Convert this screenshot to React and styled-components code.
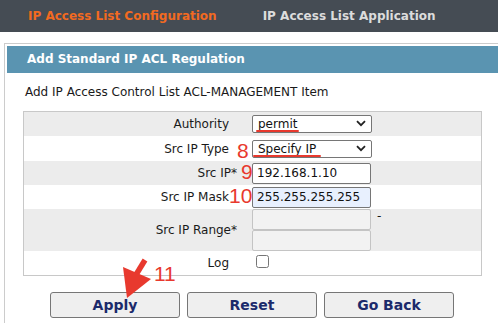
import React from 'react';
import styled, { createGlobalStyle } from 'styled-components';

const GlobalStyle = createGlobalStyle`
  body {
    margin: 0;
    font-family: 'DejaVu Sans', Verdana, sans-serif;
    font-size: 12px;
    color: #1a1a1a;
    background: #ffffff;
    overflow: hidden;
  }
`;

// components
const TopBar = styled.div`
  height: 32px;
  background-color: #454c54;
  display: flex;
  align-items: center;
  gap: 46px;
  padding-left: 28px;
`;

const Tab = styled.div`
  font-weight: bold;
  font-size: 12px;
  color: ${props => (props.$active ? '#f26a21' : '#dcdcdc')};
`;

const Panel = styled.div`
  box-sizing: border-box;
  margin: 11px 0 0 4px;
  border: 1px solid #cccccc;
  border-right: none;
  border-bottom: none;
  padding: 2px 0 0 2px;
  min-height: 280px;
`;

const PanelHeader = styled.div`
  height: 27px;
  line-height: 27px;
  background-color: #5a94b1;
  color: #ffffff;
  font-weight: bold;
  font-size: 12px;
  padding-left: 20px;
`;

const SubTitle = styled.div`
  height: 38px;
  line-height: 38px;
  padding-left: 18px;
  font-size: 12px;
`;

const Table = styled.div`
  margin-left: 16px;
  width: 457px;
  border: 1px solid #c8c8c8;
`;

const Row = styled.div`
  position: relative;
  display: grid;
  grid-template-columns: 228px 1fr;
  align-items: center;
  height: ${props => props.$h || 24}px;
  background-color: ${props => (props.$gray ? '#ececec' : '#ffffff')};
`;

const Label = styled.div`
  text-align: right;
  padding-right: 23px;
  white-space: nowrap;
  .star {
    margin-right: -8px;
  }
`;

const Annot = styled.span`
  position: absolute;
  left: ${props => props.$x}px;
  top: ${props => props.$y}px;
  font-family: 'Liberation Sans', Arial, sans-serif;
  font-size: 21px;
  line-height: 21px;
  color: #e8392e;
  pointer-events: none;
`;

const SelectWrap = styled.div`
  position: relative;
  width: 120px;
  height: 18px;
  svg {
    position: absolute;
    right: 6px;
    top: 5px;
    pointer-events: none;
  }
`;

const Select = styled.select`
  appearance: none;
  width: 100%;
  height: 100%;
  box-sizing: border-box;
  border: 1px solid #767676;
  border-radius: 2px;
  background: #ffffff;
  font-family: 'DejaVu Sans', Verdana, sans-serif;
  font-size: 12px;
  color: #111111;
  padding: 0 0 0 5px;
  margin: 0;
  outline: none;
`;

const Underline = styled.span`
  position: absolute;
  left: ${props => props.$x}px;
  bottom: 1px;
  width: ${props => props.$w}px;
  height: 2px;
  border-radius: 1px;
  background-color: #e8392e;
`;

const TextInput = styled.input`
  display: block;
  width: 119px;
  height: 21px;
  box-sizing: border-box;
  margin: 0;
  padding: 1px 4px;
  border: 1px solid ${props => (props.disabled ? '#c4c4c4' : '#767676')};
  border-radius: 2px;
  background-color: ${props => (props.disabled ? '#f2f2f2' : props.$fill ? '#e8f0fe' : '#ffffff')};
  font-family: 'DejaVu Sans', Verdana, sans-serif;
  font-size: 12px;
  color: #111111;
  outline: none;
`;

const RangeCell = styled.div`
  display: flex;
  align-items: flex-start;
  gap: 6px;
  .dash {
    line-height: 14px;
  }
`;

const Check = styled.input`
  width: 13px;
  height: 13px;
  margin: 0 0 0 4px;
`;

const ButtonBar = styled.div`
  position: relative;
  display: flex;
  gap: 7px;
  padding: 16px 0 0 43px;
`;

const Button = styled.button`
  width: ${props => props.$w || 130}px;
  height: 26px;
  background-color: #efefef;
  border: 1px solid #767676;
  border-radius: 3px;
  font-family: 'DejaVu Sans', Verdana, sans-serif;
  font-weight: bold;
  font-size: 14px;
  color: #1b2a6b;
  padding: 0;
`;

const Arrow = styled.svg`
  position: absolute;
  left: 111px;
  top: -18px;
`;

const Chevron = () => (
  <svg width="10" height="7" viewBox="0 0 10 7">
    <path d="M1 1.2 L5 5.2 L9 1.2" fill="none" stroke="#222" strokeWidth="1.8" />
  </svg>
);

const App = () => {
  return (
    <>
      <GlobalStyle />
      <TopBar>
        <Tab $active>IP Access List Configuration</Tab>
        <Tab>IP Access List Application</Tab>
      </TopBar>
      <Panel>
        <PanelHeader>Add Standard IP ACL Regulation</PanelHeader>
        <SubTitle>Add IP Access Control List ACL-MANAGEMENT Item</SubTitle>
        <Table>
          <Row $gray>
            <Label>Authority</Label>
            <SelectWrap>
              <Select defaultValue="permit">
                <option value="permit">permit</option>
                <option value="deny">deny</option>
              </Select>
              <Chevron />
              <Underline $x={4} $w={43} />
            </SelectWrap>
          </Row>
          <Row $h={25}>
            <Label>Src IP Type</Label>
            <SelectWrap>
              <Select defaultValue="ip">
                <option value="ip">Specify IP</option>
                <option value="any">Any IP</option>
              </Select>
              <Chevron />
              <Underline $x={1} $w={68} />
            </SelectWrap>
            <Annot $x={213} $y={4}>8</Annot>
          </Row>
          <Row $gray>
            <Label>Src IP<span className="star">*</span></Label>
            <TextInput defaultValue="192.168.1.10" />
            <Annot $x={217} $y={0}>9</Annot>
          </Row>
          <Row>
            <Label>Src IP Mask</Label>
            <TextInput $fill defaultValue="255.255.255.255" />
            <Annot $x={205} $y={0}>10</Annot>
          </Row>
          <Row $gray $h={42}>
            <Label>Src IP Range<span className="star">*</span></Label>
            <RangeCell>
              <div>
                <TextInput disabled />
                <TextInput disabled />
              </div>
              <span className="dash">-</span>
            </RangeCell>
          </Row>
          <Row>
            <Label>Log</Label>
            <div><Check type="checkbox" /></div>
          </Row>
        </Table>
        <ButtonBar>
          <Annot $x={147} $y={-13}>11</Annot>
          <Arrow width="38" height="42" viewBox="0 0 38 42">
            <line x1="27" y1="2" x2="16" y2="20" stroke="#e8392e" strokeWidth="5.5" />
            <polygon points="5,9 33,21 9,40" fill="#e8392e" />
          </Arrow>
          <Button>Apply</Button>
          <Button>Reset</Button>
          <Button>Go Back</Button>
        </ButtonBar>
      </Panel>
    </>
  );
};

export default App;
